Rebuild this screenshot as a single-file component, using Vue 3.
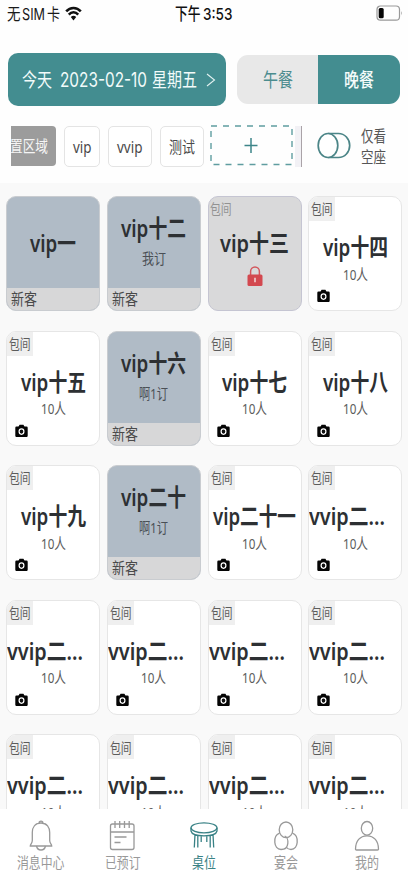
<script setup>
import { h } from 'vue'

// Condensed label: text of font size s drawn over an advance width of w
const Txt = (props) =>
  h('svg', { class: 'txt', width: props.w, height: props.s }, [
    h('text', {
      x: 0,
      y: props.s * 0.88,
      'font-size': props.s,
      textLength: props.w,
      lengthAdjust: 'spacingAndGlyphs'
    }, props.t)
  ])
Txt.props = ['t', 'w', 's']

const room = (name, w, left) => ({ kind: 'free', name, w, left })
const used = (name, w, sub, sw) => ({ kind: 'used', name, w, sub, sw })
const more = () => room('vvip二...', 76, true)

const cards = [
  used('vip一', 46),
  used('vip十二', 65, '我订', 24),
  { kind: 'locked', name: 'vip十三', w: 69 },
  room('vip十四', 65),
  room('vip十五', 65),
  used('vip十六', 65, '啊1订', 29),
  room('vip十七', 65),
  room('vip十八', 65),
  room('vip十九', 65),
  used('vip二十', 65, '啊1订', 29),
  room('vip二十一', 83),
  more(), more(), more(), more(), more(), more(), more(), more(), more()
]
const tabs = [
  { id: 'bell', t: '消息中心', w: 47.5 },
  { id: 'cal', t: '已预订', w: 35.5 },
  { id: 'table', t: '桌位', w: 24 },
  { id: 'party', t: '宴会', w: 24 },
  { id: 'me', t: '我的', w: 24 }
]
</script>

<template>
  <div class="screen">
    <header class="status">
      <div class="carrier">
        <Txt t="无" :w="13.5" :s="16" /><Txt class="sim" t="SIM" :w="23" :s="15.5" /><Txt t="卡" :w="13" :s="16" />
        <svg class="wifi" width="17" height="15" viewBox="0 0 17 15">
          <path d="M1.2 5.3C5.2 .8 11.8.8 15.8 5.3M3.8 8.6c2.7-3 6.7-3 9.4 0" fill="none" stroke="#111" stroke-width="2.5" />
          <path d="M5.8 11.1q2.7-2.6 5.4 0L8.5 14.4z" fill="#111" />
        </svg>
      </div>
      <div class="clock"><Txt t="下午" :w="25.5" :s="16.5" /><Txt t="3:53" :w="29.5" :s="16.5" /></div>
      <svg class="battery" width="27" height="17" viewBox="0 0 27 17">
        <rect x="1" y="1" width="22.5" height="14.2" rx="3.5" fill="none" stroke="#999" stroke-width="1.2" />
        <rect x="2.7" y="3" width="5" height="10.3" rx="1.5" fill="#050505" />
        <path d="M25 6q1.6 2.2 0 4.4z" fill="#999" />
      </svg>
    </header>

    <div class="top">
      <button class="date">
        <Txt t="今天" :w="30" :s="19" />
        <Txt class="num" t="2023-02-10" :w="87" :s="19.5" />
        <Txt t="星期五" :w="45" :s="19" />
        <svg class="chev" width="10" height="14" viewBox="0 0 10 14"><path d="M1 1l7.5 6L1 13" fill="none" stroke="#e3f2f1" stroke-width="1.1" /></svg>
      </button>
      <div class="meals">
        <button class="meal"><Txt t="午餐" :w="30" :s="19" /></button>
        <button class="meal on"><Txt t="晚餐" :w="30" :s="19" /></button>
      </div>
    </div>

    <div class="filters">
      <div class="area"><Txt t="置区域" :w="38" :s="15.5" /></div>
      <div class="chip c1"><Txt t="vip" :w="18.5" :s="17" /></div>
      <div class="chip c2"><Txt t="vvip" :w="25.5" :s="17" /></div>
      <div class="chip c3"><Txt t="测试" :w="26" :s="15.5" /></div>
      <svg class="add" width="83" height="41" viewBox="0 0 83 41">
        <rect x="1" y="1" width="81" height="38.5" fill="none" stroke="#5f9da0" stroke-width="1.4" stroke-dasharray="6 6" />
        <path d="M34.5 20.5h13M41 13v15" stroke="#3d8589" stroke-width="1.5" />
      </svg>
      <div class="rule"></div>
      <svg class="toggle" width="34" height="27" viewBox="0 0 34 27">
        <path d="M11 1.5h10.5a11.2 12 0 0 1 0 24H11" fill="none" stroke="#4b8587" stroke-width="1.7" />
        <ellipse cx="11" cy="13.5" rx="9.8" ry="12" fill="#fff" stroke="#4b8587" stroke-width="1.7" />
      </svg>
      <div class="only"><Txt t="仅看" :w="25" :s="15.5" /><Txt t="空座" :w="25" :s="15.5" /></div>
    </div>

    <main class="hall">
      <div class="grid">
        <article v-for="(c, i) in cards" :key="i" class="card" :class="[c.kind, { solo: c.kind === 'used' && !c.sub, left: c.left }]">
          <div v-if="c.kind !== 'used'" class="tag"><Txt t="包间" :w="21.5" :s="13.5" /></div>
          <div class="name"><Txt :t="c.name" :w="c.w" :s="24" /></div>
          <template v-if="c.kind === 'free'">
            <div class="seats"><Txt t="10人" :w="25" :s="15" /></div>
            <svg class="cam" width="13" height="14" viewBox="0 0 13 14">
              <path d="M1.5 2.5h2L4.6.7h3.8l1.1 1.8h2q1.2 0 1.2 1.2v8q0 1.3-1.2 1.3h-10Q.3 13 .3 11.7v-8q0-1.2 1.2-1.2z" fill="#050505" />
              <ellipse cx="6.5" cy="7.6" rx="2.4" ry="2.7" fill="#111" stroke="#fff" stroke-width="1.2" />
            </svg>
          </template>
          <svg v-if="c.kind === 'locked'" class="lock" width="16" height="21" viewBox="0 0 16 21">
            <path d="M3.6 9V5.5a4.4 4.4 0 0 1 8.8 0V9" fill="none" stroke="#d3575d" stroke-width="1.5" />
            <rect x=".5" y="8.5" width="15" height="11.5" rx="1.5" fill="#d3484f" />
            <path d="M8 11.8v4.5" stroke="#f3dada" stroke-width="1.5" />
          </svg>
          <template v-if="c.kind === 'used'">
            <div v-if="c.sub" class="guest"><Txt :t="c.sub" :w="c.sw" :s="15" /></div>
            <div class="foot"><Txt t="新客" :w="26" :s="15.5" /></div>
          </template>
        </article>
      </div>
    </main>

    <nav class="tabs">
      <div v-for="t in tabs" :key="t.id" class="tab" :class="{ active: t.id === 'table' }">
        <svg class="ico" width="30" height="32" viewBox="0 0 30 32" fill="none" stroke="currentColor" stroke-width="1.3">
          <g v-if="t.id === 'bell'">
            <path d="M13 3.3q0-2.2 2-2.2t2 2.2M15 3C9 3 6.300 7.400 6.300 12.500v8c0 3-2 3.500-2 5.500h21.400c0-2-2-2.500-2-5.500v-8C23.700 7.400 21 3 15 3z" />
            <path d="M10.500 26q.8 4 4.500 4t4.500-4" />
          </g>
          <g v-else-if="t.id === 'cal'">
            <rect x="3.500" y="4" width="23.500" height="25.500" rx="2" />
            <path d="M3.500 12H27M8 1v7M12.700 1v7M17.500 1v7M22.200 1v7M7.500 17h12M7.500 22.500h6" />
          </g>
          <g v-else-if="t.id === 'table'">
            <ellipse cx="15" cy="7.800" rx="13" ry="5" />
            <path d="M2 7.800v3.200c1.500 6.500 24.500 6.500 26 0V7.800M6 14.300L5.300 27.500M8.800 15.300V27.500M21.200 15.300V27.500M24 14.300L24.700 27.500M12.200 16v6M17.800 16v6" />
          </g>
          <g v-else-if="t.id === 'party'">
            <path d="M8.500 13.200C1.500 16 2.500 29.500 10 29.500c9 0 8-12 3.700-13.500M21.500 13.200c7 2.800 6 16.300-1.500 16.300-2.200 0-3.800-1-4.800-2.500" />
            <ellipse cx="15" cy="9.800" rx="6.800" ry="7.800" />
          </g>
          <g v-else>
            <ellipse cx="15" cy="8.300" rx="5.700" ry="6.800" />
            <path d="M3.500 29.300C3.500 21 8 15.800 15 15.800s11.500 5.200 11.500 13.500q0 .7-1 .7H4.500q-1 0-1-.7z" />
          </g>
        </svg>
        <Txt :t="t.t" :w="t.w" :s="14.500" />
      </div>
    </nav>
  </div>
</template>

<style>
body { margin: 0; background: #fff; }
</style>

<style scoped>
.screen { width: 408px; height: 883px; display: flex; flex-direction: column; overflow: hidden; background: #fefefe; font-family: "Noto Sans", "Noto Sans CJK SC", sans-serif; color: #333; }
svg { display: block; flex: none; }
.txt { overflow: visible; fill: currentColor; }
button { border: 0; padding: 0; margin: 0; font: inherit; color: inherit; }
.status { box-sizing: border-box; height: 53px; padding: 5px 5px 0 7px; display: grid; grid-template-columns: 168px 1fr 27px; align-items: start; color: #1a1a1a; }
.carrier { display: flex; align-items: center; gap: 1.5px; height: 17px; font-family: Inter, "Noto Sans CJK SC", sans-serif; }
.wifi { margin-left: 4px; }
.clock { display: flex; gap: 2px; font-family: Inter, "Noto Sans CJK SC", sans-serif; font-weight: 500; color: #111; }
.top { display: flex; height: 53px; padding-left: 8px; align-items: center; gap: 11px; }
.date { width: 218px; height: 53px; border-radius: 10px; background: #438d90; color: #f2fbfa; display: flex; align-items: center; padding-left: 14px; box-sizing: border-box; font-family: Inter, "Noto Sans CJK SC", sans-serif; }
.num { margin-left: 8px; margin-right: 5px; }
.chev { margin-left: 9px; }
.meals { display: flex; width: 163px; height: 49px; border-radius: 11px; overflow: hidden; }
.meal { width: 81px; background: #e8e8e8; color: #4b8c8e; display: flex; align-items: center; justify-content: center; }
.meal.on { width: 82px; background: #438d90; color: #f5fcfb; font-weight: 500; }
.filters { display: flex; height: 77px; box-sizing: border-box; padding: 20px 0 0 11px; align-items: flex-start; }
.area { width: 45px; height: 40px; border-radius: 0 4px 4px 0; background: #9c9c9c; color: #f5f5f5; display: flex; align-items: center; justify-content: flex-end; padding-right: 8px; box-sizing: border-box; overflow: hidden; }
.chip { height: 41px; box-sizing: border-box; border: 1.5px solid #e4e4e4; border-radius: 5px; background: #fff; display: flex; align-items: center; justify-content: center; color: #4a4a4a; margin-left: 8px; }
.c2, .c3 { width: 44px; }
.c1 { width: 36px; }
.add { margin-left: 6px; margin-top: -1px; }
.rule { width: 6px; height: 41px; margin-left: 1.500px; border-right: 1px solid #aaa3a8; background: #f2f1f5; }
.toggle { margin: 6px 0 0 15.500px; }
.only { margin: 1.500px 0 0 10px; display: flex; flex-direction: column; gap: 6px; color: #555; }
.hall { height: 626px; overflow: hidden; background: #f9f9f9; box-sizing: border-box; padding: 13px 0 0 6px; }
.grid { display: grid; grid-template-columns: repeat(4, 94px); grid-auto-rows: 115px; column-gap: 6.8px; row-gap: 19.6px; }
.card { position: relative; box-sizing: border-box; border: 1.5px solid #e6e6e6; border-radius: 10px; background: #fff; overflow: hidden; display: flex; flex-direction: column; align-items: center; }
.tag { align-self: flex-start; width: 26px; height: 24px; background: #efefef; display: flex; align-items: center; padding-left: 2px; box-sizing: border-box; color: #5c5c5c; flex: none; }
.name { height: 24px; font-weight: 600; color: #2d3033; margin-top: 14px; flex: none; }
.left .name { align-self: flex-start; }
.seats { margin-top: 7.500px; color: #5c5c5c; }
.cam { align-self: flex-start; margin: 7.500px 0 0 8px; }
.used { background: #b0bbc6; border-color: #c9ccd0; }
.used .name { margin-top: 19px; }
.solo .name { margin-top: 34px; }
.guest { margin-top: 11px; color: #4a4f55; }
.foot { margin-top: auto; width: 100%; height: 22px; background: #d7d7d8; display: flex; align-items: center; padding: 0 0 0 4px; box-sizing: border-box; color: #4a4a4a; flex: none; }
.locked { background: #d9d9da; border-color: #c5c5d2; }
.locked .tag { background: transparent; color: #929292; padding-left: 1px; }
.locked .name { margin-top: 10px; }
.lock { margin-top: 11px; }
.tabs { height: 74px; background: #fff; display: grid; grid-template-columns: repeat(5, 1fr); color: #999; }
.tab { display: flex; flex-direction: column; align-items: center; padding-top: 11px; gap: 3px; }
.active { color: #398286; }
</style>
